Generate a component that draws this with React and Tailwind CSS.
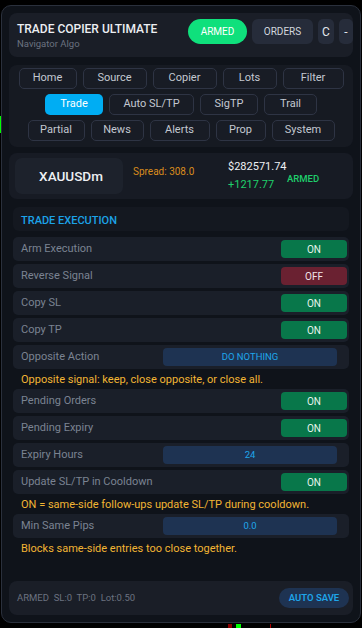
import React from "react";

const tabRows = [
  [
    ["Home", 58],
    ["Source", 64],
    ["Copier", 64],
    ["Lots", 54],
    ["Filter", 61],
  ],
  [
    ["Trade", 58],
    ["Auto SL/TP", 85],
    ["SigTP", 58],
    ["Trail", 53],
  ],
  [
    ["Partial", 57],
    ["News", 53],
    ["Alerts", 60],
    ["Prop", 50],
    ["System", 63],
  ],
];

const Toggle = ({ on }) => (
  <div
    className={
      on
        ? "w-[66px] h-[18px] rounded-[4px] bg-[#08774a] text-[#e6f4ec] text-[10px] flex items-center justify-center"
        : "w-[66px] h-[18px] rounded-[4px] bg-[#6a2131] text-[#f1e4e7] text-[10px] flex items-center justify-center"
    }
  >
    {on ? "ON" : "OFF"}
  </div>
);

const Select = ({ value }) => (
  <div className="w-[174px] h-[18px] mr-[10px] rounded-[4px] bg-[#1e3352] text-[#1ea6ea] text-[9.5px] flex items-center justify-center">
    {value}
  </div>
);

const Row = ({ label, children }) => (
  <div className="h-[24px] rounded-[5px] bg-[#1a1f29] flex items-center justify-between pl-[8px] pr-[2px]">
    <span className="pt-[1px] text-[11px] text-[#7b8392]">{label}</span>
    {children}
  </div>
);

const Note = ({ children }) => (
  <div className="pt-[4px] pl-[8px] text-[11px] leading-[13px] text-[#f2b534]">{children}</div>
);

export default function App() {
  return (
    <div
      className="relative min-h-[628px] bg-black pt-[5px] px-[1px]"
      style={{ fontFamily: '"Segoe UI", Roboto, "Liberation Sans", sans-serif' }}
    >
      {/* chart bits behind the panel */}
      <div className="absolute left-0 top-[116px] w-[2px] h-[17px] bg-[#00ff00]" />
      <div className="absolute left-[228px] top-[624px] w-[4px] h-[4px] bg-[#8b0000]" />
      <div className="absolute left-[236px] top-[624px] w-[5px] h-[4px] bg-[#00ff00]" />
      <div className="absolute left-[270px] top-[624px] w-[1px] h-[4px] bg-[#b00000]" />

      <div className="relative h-[618px] rounded-[10px] border border-[#2a303c] bg-[#0f131a] flex flex-col p-[7px]">
        {/* Header */}
        <div className="h-[44px] shrink-0 rounded-[8px] bg-[#1a1e27] flex items-start pl-[8px] pt-[6px]">
          <div>
            <div className="mt-[2px] text-[12px] leading-[16px] font-medium text-[#eceef2]">TRADE COPIER ULTIMATE</div>
            <div className="mt-[1px] text-[9.5px] leading-[12px] text-[#6b7280]">Navigator Algo</div>
          </div>
          <div className="ml-auto flex gap-[5px]">
            <div className="w-[59px] h-[25px] rounded-full bg-[#0fe07c] text-white text-[10px] flex items-center justify-center">
              ARMED
            </div>
            <div className="w-[61px] h-[25px] rounded-[6px] bg-[#262c3a] text-[#d3d7de] text-[10px] flex items-center justify-center">
              ORDERS
            </div>
            <div className="w-[16px] h-[25px] rounded-[5px] bg-[#262c3a] text-[#e3e6eb] text-[12px] flex items-center justify-center">
              C
            </div>
            <div className="w-[14px] h-[25px] rounded-[5px] bg-[#262c3a] text-[#e3e6eb] text-[12px] flex items-center justify-center">
              -
            </div>
          </div>
        </div>

        {/* Tabs */}
        <div className="mt-[8px] shrink-0 rounded-[8px] bg-[#161a22] pt-[3px] pb-[6px] flex flex-col gap-[5px]">
          {tabRows.map((row, i) => (
            <div key={i} className="flex justify-center gap-[6px]">
              {row.map(([name, w]) =>
                name === "Trade" ? (
                  <div
                    key={name}
                    className="h-[21px] rounded-[5px] bg-[#00adf3] text-white text-[11px] flex items-center justify-center"
                    style={{ width: w }}
                  >
                    {name}
                  </div>
                ) : (
                  <div
                    key={name}
                    className="h-[21px] rounded-[5px] border border-[#2e3444] bg-[#181c25] text-[#c3c8d1] text-[11px] flex items-center justify-center"
                    style={{ width: w }}
                  >
                    {name}
                  </div>
                )
              )}
            </div>
          ))}
        </div>

        {/* Symbol */}
        <div className="mt-[6px] h-[46px] shrink-0 rounded-[8px] bg-[#171b24] flex items-start pl-[6px]">
          <div className="mt-[5px] w-[108px] h-[36px] rounded-[7px] bg-[#1d222c] text-[#eef0f3] text-[13.5px] font-medium flex items-center justify-center pl-[4px]">
            XAUUSDm
          </div>
          <div className="ml-[10px] mt-[11px] w-[95px] text-[10px] text-[#d98b1d]">Spread: 308.0</div>
          <div className="mt-[7px] w-[59px] flex flex-col">
            <span className="text-[11px] leading-[14px] text-[#eef0f3]">$282571.74</span>
            <span className="mt-[4px] text-[11px] leading-[14px] text-[#1fcf6c]">+1217.77</span>
          </div>
          <div className="mt-[19px] text-[9.5px] font-medium text-[#1fcf6c]">ARMED</div>
        </div>

        {/* Trade execution */}
        <div className="mt-[8px] mx-[4px] flex flex-col">
          <div className="h-[24px] rounded-[6px] bg-[#141820] flex items-center pl-[8px] pt-[4px] text-[11px] font-medium text-[#1ca3e8]">
            TRADE EXECUTION
          </div>
          <div className="mt-[6px] flex flex-col gap-[3px]">
            <Row label="Arm Execution"><Toggle on /></Row>
            <Row label="Reverse Signal"><Toggle on={false} /></Row>
            <Row label="Copy SL"><Toggle on /></Row>
            <Row label="Copy TP"><Toggle on /></Row>
            <div>
              <Row label="Opposite Action"><Select value="DO NOTHING" /></Row>
              <Note>Opposite signal: keep, close opposite, or close all.</Note>
            </div>
            <Row label="Pending Orders"><Toggle on /></Row>
            <Row label="Pending Expiry"><Toggle on /></Row>
            <Row label="Expiry Hours"><Select value="24" /></Row>
            <div>
              <Row label="Update SL/TP in Cooldown"><Toggle on /></Row>
              <Note>ON = same-side follow-ups update SL/TP during cooldown.</Note>
            </div>
            <div>
              <Row label="Min Same Pips"><Select value="0.0" /></Row>
              <Note>Blocks same-side entries too close together.</Note>
            </div>
          </div>
        </div>

        {/* Footer */}
        <div className="mt-auto h-[34px] shrink-0 rounded-[8px] bg-[#1a1e27] flex items-center pl-[8px] pr-[4px]">
          <span className="text-[9.5px] text-[#6b7280] whitespace-pre">ARMED  SL:0  TP:0  Lot:0.50</span>
          <div className="ml-auto w-[70px] h-[20px] rounded-full bg-[#1e3352] text-[#1ea6ea] text-[9.5px] font-semibold flex items-center justify-center">
            AUTO SAVE
          </div>
        </div>
      </div>
    </div>
  );
}
